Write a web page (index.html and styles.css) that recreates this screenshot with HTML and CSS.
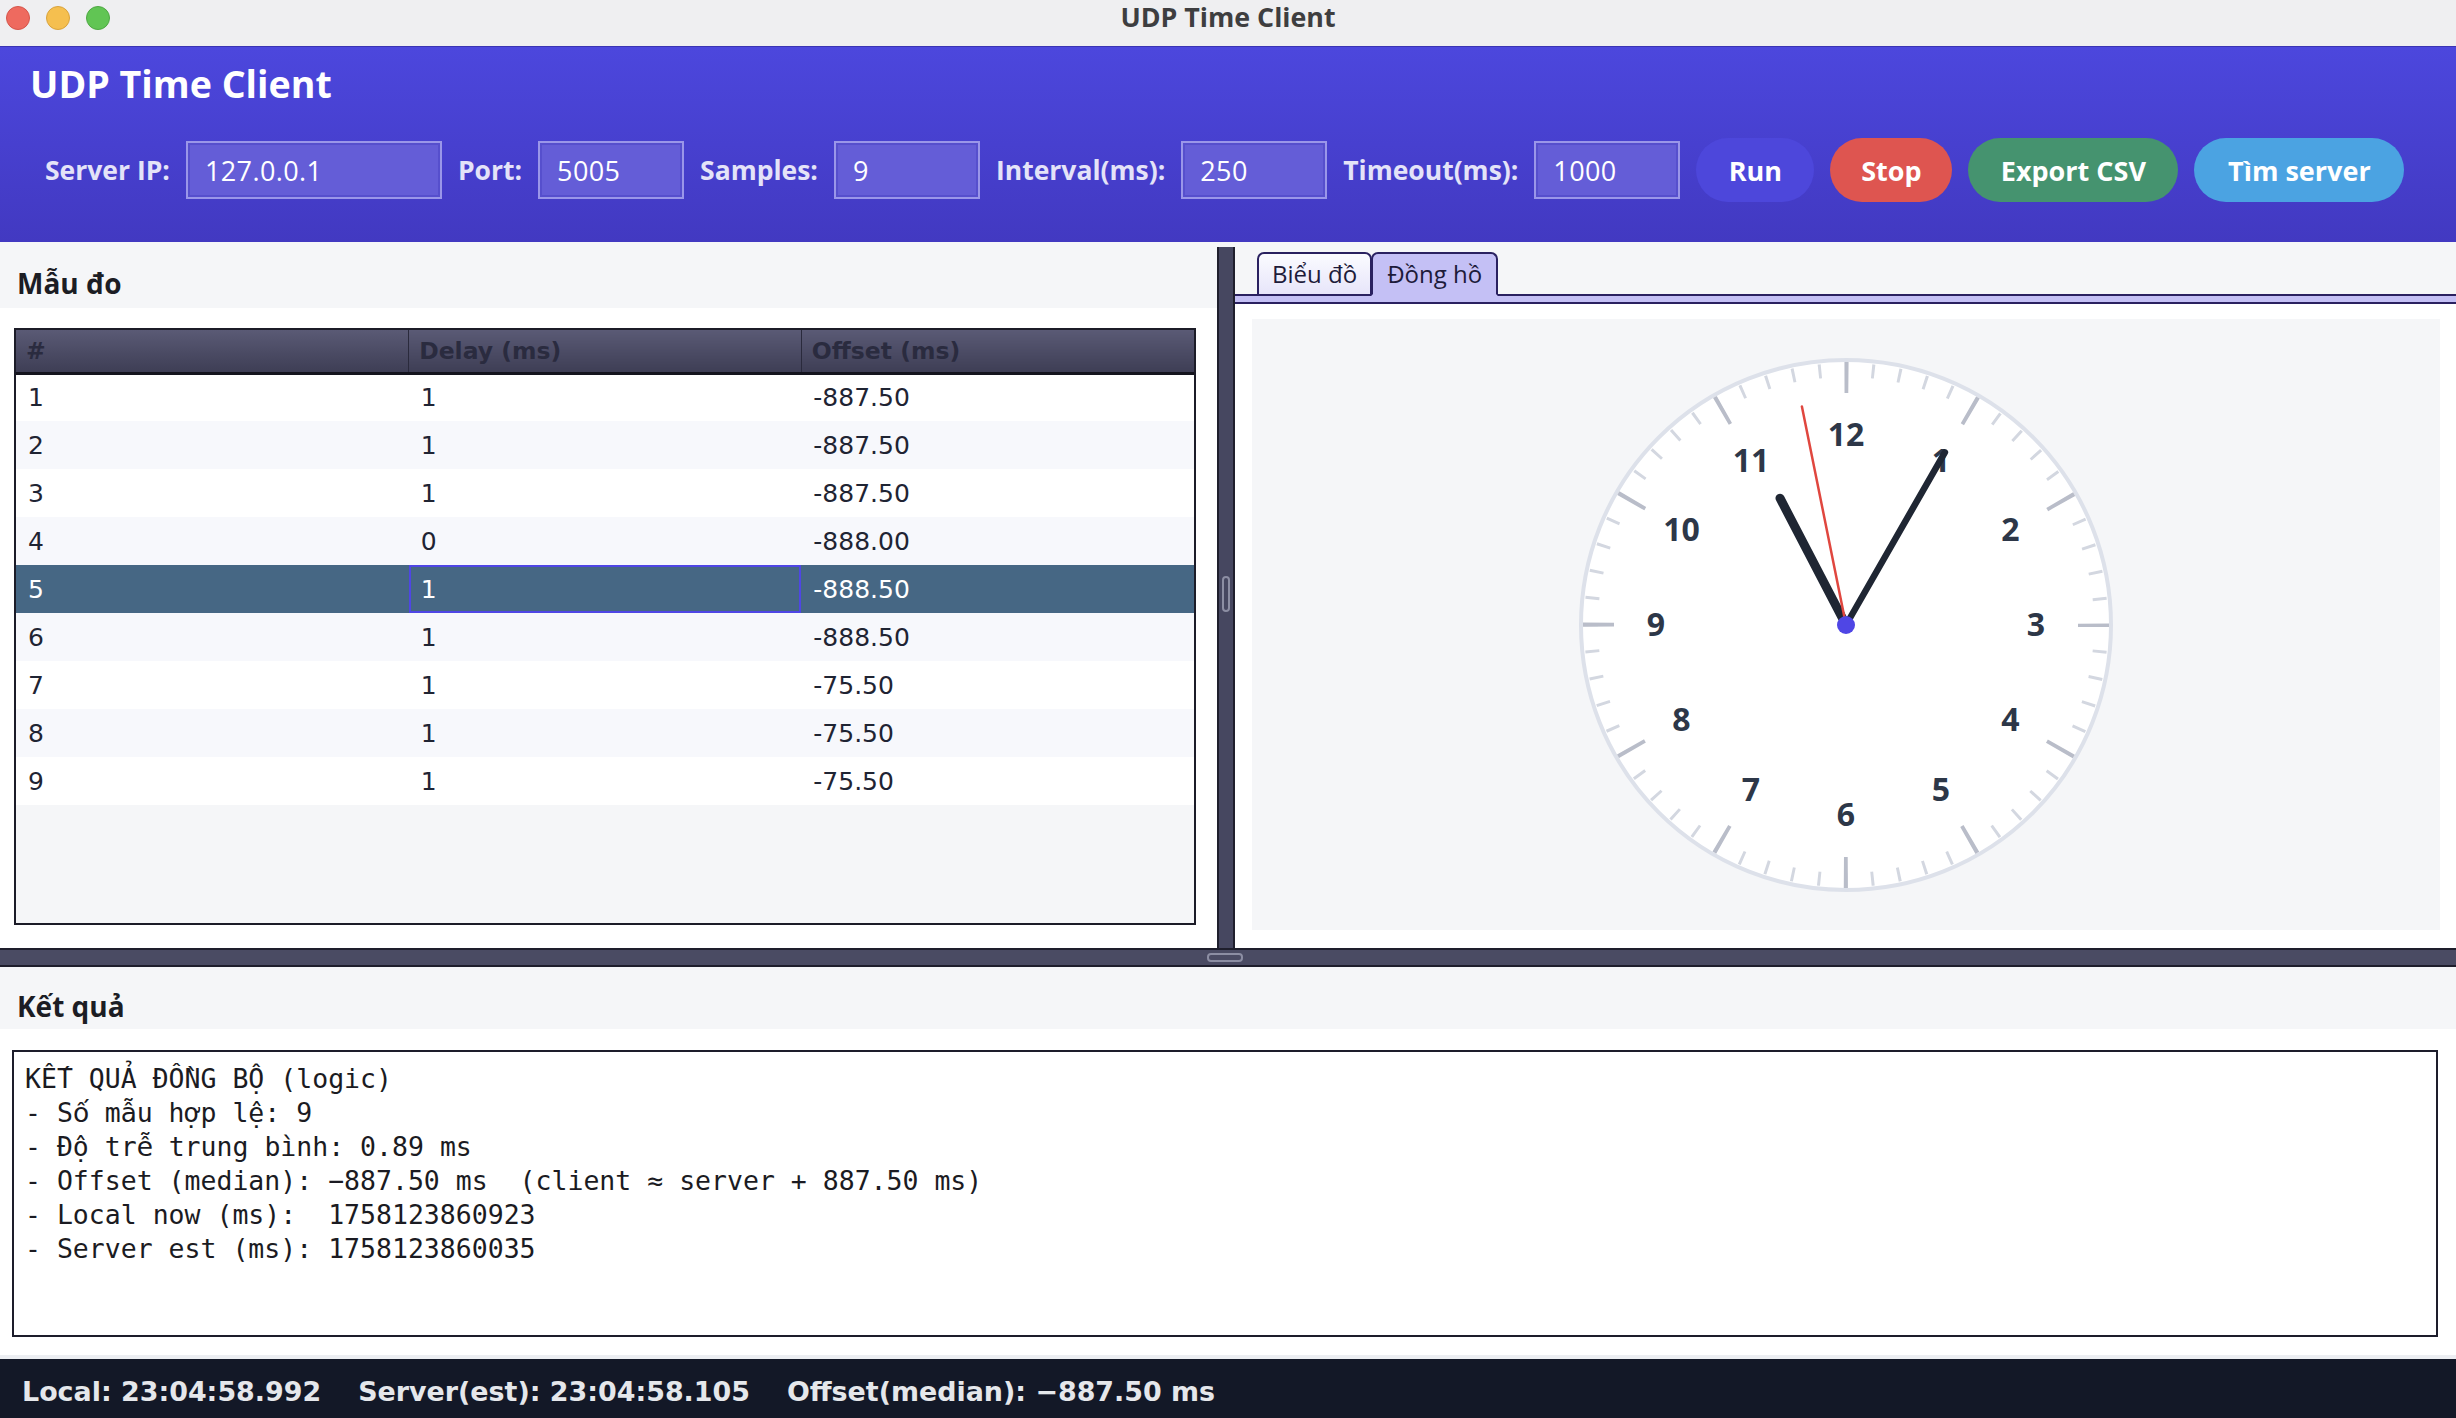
FILE: index.html
```html
<!DOCTYPE html>
<html lang="vi">
<head>
<meta charset="utf-8">
<title>UDP Time Client</title>
<link rel="stylesheet" href="styles.css">
</head>
<body>
<div class="window">
  <div class="titlebar">
    <div class="lights">
      <span class="light red"></span>
      <span class="light yellow"></span>
      <span class="light green"></span>
    </div>
    <div class="win-title">UDP Time Client</div>
    <div class="titlebar-spacer"></div>
  </div>

  <header class="header">
    <h1 class="app-title">UDP Time Client</h1>
    <div class="controls">
      <span class="label">Server IP:</span>
      <div class="field field-wide">127.0.0.1</div>
      <span class="label">Port:</span>
      <div class="field">5005</div>
      <span class="label">Samples:</span>
      <div class="field">9</div>
      <span class="label">Interval(ms):</span>
      <div class="field">250</div>
      <span class="label">Timeout(ms):</span>
      <div class="field">1000</div>
      <button class="btn btn-run">Run</button>
      <button class="btn btn-stop">Stop</button>
      <button class="btn btn-export">Export CSV</button>
      <button class="btn btn-find">Tìm server</button>
    </div>
  </header>

  <main class="split">
    <section class="left-pane">
      <div class="pane-title">Mẫu đo</div>
      <div class="pane-body">
        <div class="tablebox">
          <table class="samples">
            <thead>
              <tr><th>#</th><th>Delay (ms)</th><th>Offset (ms)</th></tr>
            </thead>
            <tbody>
              <tr><td>1</td><td>1</td><td>-887.50</td></tr>
              <tr><td>2</td><td>1</td><td>-887.50</td></tr>
              <tr><td>3</td><td>1</td><td>-887.50</td></tr>
              <tr><td>4</td><td>0</td><td>-888.00</td></tr>
              <tr class="selected"><td>5</td><td class="focused">1</td><td>-888.50</td></tr>
              <tr><td>6</td><td>1</td><td>-888.50</td></tr>
              <tr><td>7</td><td>1</td><td>-75.50</td></tr>
              <tr><td>8</td><td>1</td><td>-75.50</td></tr>
              <tr><td>9</td><td>1</td><td>-75.50</td></tr>
            </tbody>
          </table>
        </div>
      </div>
    </section>

    <div class="vdivider"><span class="vgrip"></span></div>

    <section class="right-pane">
      <div class="tabstrip">
        <div class="tab">Biểu đồ</div>
        <div class="tab tab-active">Đồng hồ</div>
      </div>
      <div class="tabband"></div>
      <div class="tabcontent">
        <div class="canvas">
          <svg class="clock" width="560" height="560" viewBox="-280 -280 560 560">
            <circle r="265" fill="#ffffff" stroke="#dde1ea" stroke-width="4"/>
            <circle r="255" fill="none" stroke="#d3d7e0" stroke-width="14" stroke-dasharray="3 23.704" stroke-dashoffset="1.5"/>
            <circle r="247.5" fill="none" stroke="#b9bdc9" stroke-width="31" stroke-dasharray="4 125.59" stroke-dashoffset="2"/>
            <g class="nums">
              <text x="95" y="-153">1</text>
              <text x="164.5" y="-83.6">2</text>
              <text x="190" y="11.4">3</text>
              <text x="164.5" y="106.4">4</text>
              <text x="95" y="175.9">5</text>
              <text x="0" y="201.4">6</text>
              <text x="-95" y="175.9">7</text>
              <text x="-164.5" y="106.4">8</text>
              <text x="-190" y="11.4">9</text>
              <text x="-164.5" y="-83.6">10</text>
              <text x="-95" y="-153">11</text>
              <text x="0" y="-178.6">12</text>
            </g>
            <line x1="0" y1="0" x2="-66" y2="-126.8" stroke="#1f2633" stroke-width="9" stroke-linecap="round"/>
            <line x1="0" y1="0" x2="98.9" y2="-172.7" stroke="#1f2633" stroke-width="6.5" stroke-linecap="round"/>
            <line x1="0" y1="0" x2="-44.1" y2="-218.6" stroke="#e0473f" stroke-width="2.5" stroke-linecap="round"/>
            <circle r="9" fill="#4f46e5"/>
          </svg>
        </div>
      </div>
    </section>
  </main>

  <div class="hdivider"><span class="hgrip"></span></div>

  <section class="results">
    <div class="pane-title pane-title-short">Kết quả</div>
    <div class="results-body">
      <div class="textarea">
        <div class="line">KẾT QUẢ ĐỒNG BỘ (logic)</div>
        <div class="line">- S<span class="vn">ố</span> m<span class="vn">ẫ</span>u hợp lệ: 9</div>
        <div class="line">- Độ tr<span class="vn">ễ</span> trung bình: 0.89 ms</div>
        <div class="line">- Offset (median): −887.50 ms  (client ≈ server + 887.50 ms)</div>
        <div class="line">- Local now (ms):  1758123860923</div>
        <div class="line">- Server est (ms): 1758123860035</div>
      </div>
    </div>
  </section>

  <footer class="status">
    <span class="status-item">Local: 23:04:58.992</span>
    <span class="status-item">Server(est): 23:04:58.105</span>
    <span class="status-item">Offset(median): −887.50 ms</span>
  </footer>
</div>
</body>
</html>
```

FILE: styles.css
```css
* { box-sizing: border-box; }

html, body {
  margin: 0;
  padding: 0;
  background: #ffffff;
}

body {
  width: 2456px;
  height: 1418px;
  overflow: hidden;
  font-family: "Open Sans", "DejaVu Sans", sans-serif;
}

.window {
  display: flex;
  flex-direction: column;
  width: 2456px;
  height: 1418px;
}

/* ---------- title bar ---------- */
.titlebar {
  flex: none;
  height: 46px;
  background: #efeff1;
  display: grid;
  grid-template-columns: 1fr auto 1fr;
  align-items: start;
}

.lights {
  display: flex;
  gap: 16px;
  padding: 6px 0 0 6px;
}

.light {
  width: 24px;
  height: 24px;
  border-radius: 50%;
  display: block;
}
.red { background: #ee6a5f; border: 1px solid #d5554b; }
.yellow { background: #f5bf4f; border: 1px solid #d9a33c; }
.green { background: #61c554; border: 1px solid #4ea843; }

.win-title {
  font-family: "Open Sans", sans-serif;
  font-weight: 700;
  font-size: 26.8px;
  line-height: 37px;
  margin-top: -2px;
  color: #3e3e40;
}

/* ---------- header ---------- */
.header {
  flex: none;
  height: 196px;
  background: linear-gradient(180deg, #4c47dd 0%, #4239c1 100%);
  border-top: 1px solid #3a34b3;
  padding: 11px 0 0 30px;
}

.app-title {
  margin: 0;
  font-family: "Open Sans", sans-serif;
  font-weight: 700;
  font-size: 37.6px;
  line-height: 52px;
  color: #ffffff;
}

.controls {
  margin-top: 28px;
  height: 64px;
  display: flex;
  align-items: center;
  gap: 16px;
  padding-left: 15px;
}

.label {
  font-family: "Open Sans", sans-serif;
  font-weight: 700;
  font-size: 26.5px;
  color: #e4e3f8;
  white-space: nowrap;
}

.field {
  width: 146px;
  height: 58px;
  border: 2px solid #9a96e9;
  box-shadow: inset 0 0 0 2px #564fcd;
  background: #645dd7;
  color: #ffffff;
  font-family: "Open Sans", sans-serif;
  font-size: 27px;
  letter-spacing: 0.4px;
  display: flex;
  align-items: center;
  padding-left: 17px;
}
.field-wide { width: 256px; }

.btn {
  height: 64px;
  border: none;
  border-radius: 32px;
  padding: 0;
  display: flex;
  align-items: center;
  justify-content: center;
  font-family: "Open Sans", sans-serif;
  font-weight: 700;
  font-size: 27px;
  color: #ffffff;
}
.btn-run { width: 118px; background: #4d47db; }
.btn-stop { width: 122px; background: #de5550; }
.btn-export { width: 210px; background: #45936f; }
.btn-find { width: 210px; background: #4ba3e2; }

/* ---------- split ---------- */
.split {
  flex: none;
  height: 706px;
  display: flex;
  background: #f5f6f8;
}

.left-pane {
  width: 1217px;
  flex: none;
  display: flex;
  flex-direction: column;
}

.pane-title {
  flex: none;
  height: 66px;
  background: #f5f6f8;
  display: flex;
  align-items: center;
  padding: 16px 0 0 17px;
  font-family: "Open Sans", sans-serif;
  font-weight: 700;
  font-size: 28px;
  color: #1c1d24;
}
.pane-title-short { height: 62px; }

.pane-body {
  flex: 1;
  background: #ffffff;
  padding: 20px 21px 23px 14px;
  display: flex;
}

.tablebox {
  flex: 1;
  border: 2px solid #1c1c28;
  background: #f5f6f8;
  overflow: hidden;
}

.samples {
  width: 100%;
  border-collapse: collapse;
  table-layout: fixed;
}

.samples th {
  height: 43px;
  padding: 0 10px;
  text-align: left;
  font-family: "DejaVu Sans", sans-serif;
  font-weight: 700;
  font-size: 23.5px;
  color: #2a2b3f;
  background: linear-gradient(180deg, #5a5a75 0%, #3e3e55 100%);
  border-right: 1px solid #2a2a3c;
  border-bottom: 3px solid #14141e;
}
.samples th:last-child { border-right: none; }

.samples td {
  height: 48px;
  padding: 0 12px;
  font-family: "DejaVu Sans", sans-serif;
  font-size: 25px;
  color: #1f2433;
  background: #ffffff;
}
.samples tbody tr:nth-child(even) td { background: #f7f8fc; }

.samples tr.selected td {
  background: #466784;
  color: #ffffff;
}
.samples td.focused { box-shadow: inset 0 0 0 2px #4f46e5; }

/* vertical divider */
.vdivider {
  flex: none;
  width: 18px;
  margin-top: 5px;
  background: #464760;
  border-left: 2px solid #1f1f2d;
  border-right: 2px solid #1f1f2d;
  display: flex;
  align-items: center;
  justify-content: center;
}
.vgrip {
  width: 8px;
  height: 36px;
  border: 2px solid #8c8ea3;
  border-radius: 4px;
  margin-bottom: 8px;
}

/* right pane */
.right-pane {
  flex: 1;
  display: flex;
  flex-direction: column;
}

.tabstrip {
  flex: none;
  height: 54px;
  background: #f5f6f8;
  border-bottom: 2px solid #2a2160;
  display: flex;
  align-items: flex-end;
  padding-left: 22px;
}

.tab {
  height: 44px;
  margin-bottom: -2px;
  padding: 0 13px 2px;
  border: 2px solid #2a2160;
  border-radius: 7px 7px 0 0;
  background: linear-gradient(180deg, #fbfbff 0%, #e7e5fa 100%);
  display: flex;
  align-items: center;
  font-family: "Open Sans", sans-serif;
  font-size: 24px;
  color: #1d1b3a;
}
.tab-active {
  background: #c4c0f5;
  border-bottom-color: #c4c0f5;
  margin-left: -1px;
  padding: 0 14px 2px;
}

.tabband {
  flex: none;
  height: 8px;
  background: #c4c0f5;
  border-bottom: 2px solid #2a2160;
}

.tabcontent {
  flex: 1;
  background: #ffffff;
  padding: 15px 16px 18px 17px;
  display: flex;
}

.canvas {
  flex: 1;
  background: #f5f6f8;
  display: flex;
  align-items: center;
  justify-content: center;
  overflow: hidden;
}

.clock { display: block; flex: none; }

.nums text {
  font-family: "Open Sans", sans-serif;
  font-weight: 700;
  font-size: 32px;
  fill: #2d3748;
  text-anchor: middle;
}

/* horizontal divider */
.hdivider {
  flex: none;
  height: 19px;
  background: #4a4b63;
  border-top: 2px solid #1e1e2c;
  border-bottom: 2px solid #1e1e2c;
  display: flex;
  align-items: center;
  justify-content: center;
}
.hgrip {
  width: 36px;
  height: 9px;
  border: 2px solid #8c8ea3;
  border-radius: 4px;
  margin-left: -6px;
}

/* results */
.results {
  flex: none;
  height: 388px;
  display: flex;
  flex-direction: column;
}

.results-body {
  flex: 1;
  background: #ffffff;
  padding: 21px 18px 18px 12px;
  display: flex;
}

.textarea {
  flex: 1;
  border: 2px solid #1d1d2b;
  background: #ffffff;
  padding: 10px 11px;
  font-family: "DejaVu Sans Mono", monospace;
  font-size: 26.5px;
  line-height: 34px;
  color: #1b1b22;
}

.line {
  height: 34px;
  white-space: pre;
}

.vn {
  font-family: "DejaVu Sans", "Noto Sans", sans-serif;
  letter-spacing: -0.3px;
}

/* status bar */
.status {
  flex: none;
  height: 63px;
  border-top: 4px solid #eceef2;
  background: #131827;
  display: flex;
  align-items: center;
  gap: 37px;
  padding: 6px 0 0 22px;
  font-family: "DejaVu Sans", sans-serif;
  font-weight: 700;
  font-size: 26.9px;
  color: #e5e7eb;
  white-space: nowrap;
}
```
